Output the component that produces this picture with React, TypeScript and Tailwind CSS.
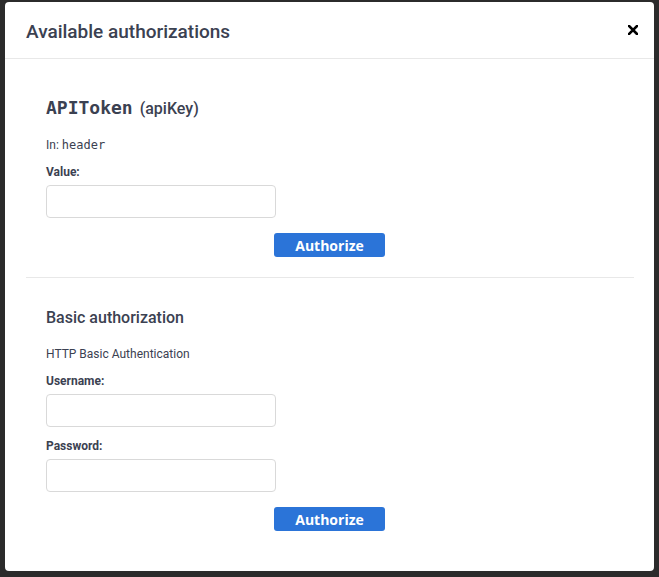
import { useState } from "react";

const sans = "font-['Roboto',_'Open_Sans',_sans-serif]";
const mono = "font-['DejaVu_Sans_Mono',_'Liberation_Mono',_monospace]";

const Field = ({
  label,
  value,
  onChange,
  gap = "mt-[9px]",
}: {
  label: string;
  value: string;
  onChange: (v: string) => void;
  gap?: string;
}) => (
  <>
    <label className={`block text-[12px] leading-[18px] font-bold text-[#3b4151] ${gap}`}>{label}</label>
    <input
      value={value}
      onChange={(e) => onChange(e.target.value)}
      className="block mt-[4px] w-[230px] h-[33px] rounded-[4px] border border-[#d9d9d9] px-2 text-sm outline-none"
    />
  </>
);

const AuthorizeButton = () => (
  <div className="flex justify-center mt-[15px] pr-[1px]">
    <button className="w-[111px] h-[24px] rounded-[3px] bg-[#2b74d8] text-white font-['Open_Sans',_sans-serif] text-[14px] font-bold leading-[23px]">
      Authorize
    </button>
  </div>
);

export default function App() {
  const [apiKey, setApiKey] = useState("");
  const [user, setUser] = useState("");
  const [pass, setPass] = useState("");

  return (
    <div className={`w-[659px] h-[577px] bg-[#2b2b2b] pt-[2px] pl-[5px] ${sans}`}>
      <div className="w-[649px] h-[569px] bg-white rounded-[4px] overflow-hidden">
        {/* HEADER */}
        <div className="h-[56px] flex items-center justify-between pl-[21px] pr-[16px] border-b border-[#e8e8e8] box-content">
          <h3 className="mt-[4px] text-[19px] font-medium text-[#3b4151]">Available authorizations</h3>
          <button className="w-[10px] h-[10px] -mt-[1px]">
            <svg viewBox="0 0 10 10" className="w-[10px] h-[10px]">
              <path d="M1 1 L9 9 M9 1 L1 9" stroke="#000" strokeWidth="2.6" strokeLinecap="square" />
            </svg>
          </button>
        </div>

        <div className="pl-[21px] pr-[20px]">
          {/* API KEY */}
          <div className="pt-[37px] pb-[20px] border-b border-[#e8e8e8]">
            <div className="pl-[20px]">
              <h4 className="leading-[24px] text-[#3b4151]">
                <code className={`${mono} text-[18px] font-bold`}>APIToken</code>
                <span className="text-[16px] font-medium ml-[7px]">(apiKey)</span>
              </h4>
              <p className="mt-[15px] text-[12px] leading-[18px] text-[#3b4151]">
                In: <code className={`${mono} text-[12px]`}>header</code>
              </p>
              <Field label="Value:" value={apiKey} onChange={setApiKey} />
            </div>
            <AuthorizeButton />
          </div>

          {/* BASIC */}
          <div className="pt-[28px]">
            <div className="pl-[20px]">
              <h4 className="text-[16px] font-medium leading-[24px] text-[#3b4151]">Basic authorization</h4>
              <p className="mt-[15px] text-[12px] leading-[18px] text-[#3b4151]">HTTP Basic Authentication</p>
              <Field label="Username:" value={user} onChange={setUser} />
              <Field label="Password:" value={pass} onChange={setPass} gap="mt-[10px]" />
            </div>
            <AuthorizeButton />
          </div>
        </div>
      </div>
    </div>
  );
}
